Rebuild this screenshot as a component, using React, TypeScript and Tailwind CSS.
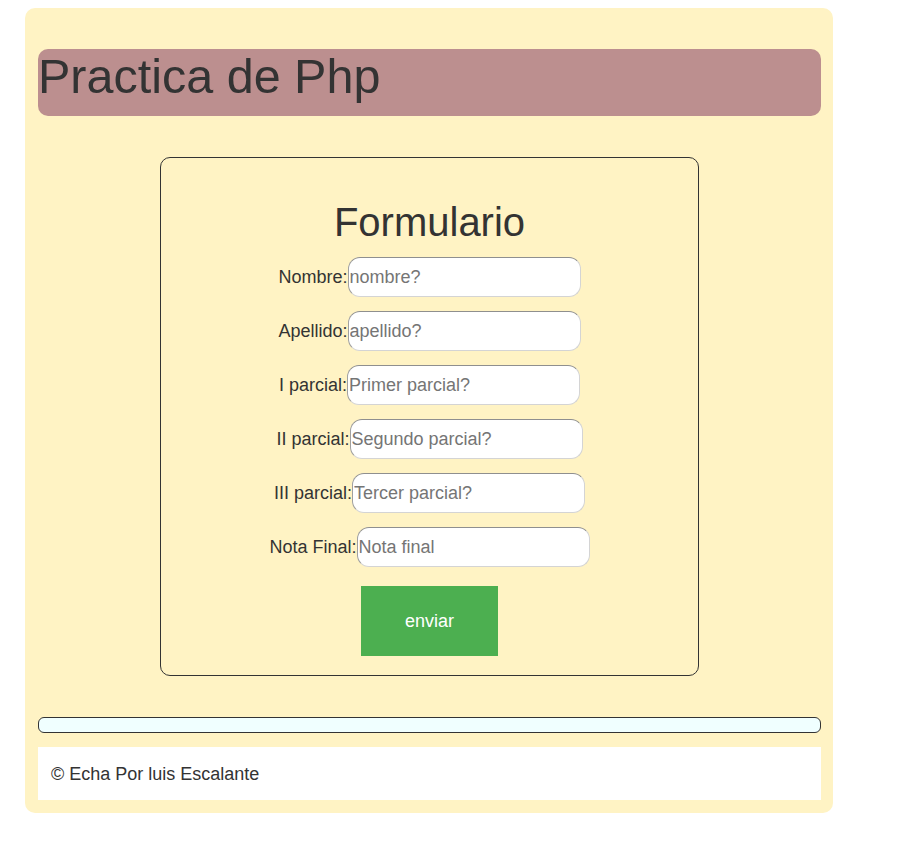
import React from "react";

const rows = [
  { label: "Nombre:", ph: "nombre?" },
  { label: "Apellido:", ph: "apellido?" },
  { label: "I parcial:", ph: "Primer parcial?" },
  { label: "II parcial:", ph: "Segundo parcial?" },
  { label: "III parcial:", ph: "Tercer parcial?" },
  { label: "Nota Final:", ph: "Nota final" },
];

export default function App() {
  return (
    <div
      className="min-h-[850px] bg-white pl-[25px] pt-[8px] text-[#333]"
      style={{ fontFamily: '"Liberation Sans", Arial, sans-serif' }}
    >
      <div className="w-[808px] rounded-[10px] bg-[#fff3c4] pt-[41px] pl-[13px] pr-[12px] pb-[13px]">
        <div className="h-[67px] rounded-[10px] bg-[#bc8f8f]">
          <h1 className="ml-0 text-[48.5px] leading-[55px] font-normal">Practica de Php</h1>
        </div>

        <form
          className="mx-auto mt-[41px] w-[539px] rounded-[10px] border border-[#333] pt-[41px] pb-[19px]"
          onSubmit={(e) => e.preventDefault()}
        >
          <h2 className="text-center text-[40px] leading-[46px] font-normal">Formulario</h2>
          <div className="mt-[12px] flex flex-col gap-[14px]">
            {rows.map((r) => (
              <div key={r.label} className="flex items-center justify-center text-[18px]">
                <label>{r.label}</label>
                <input
                  placeholder={r.ph}
                  className="h-[40px] w-[233px] rounded-[12px] border border-[#d4d4d4] border-t-[#8f8f8f] border-l-[#a0a0a0] bg-white px-[1px] text-[18px] outline-none placeholder:text-[#757575]"
                />
              </div>
            ))}
          </div>
          <button
            type="submit"
            className="mx-auto mt-[19px] block h-[70px] w-[137px] bg-[#4caf50] text-[18px] text-white"
          >
            enviar
          </button>
        </form>

        <div className="mt-[41px] h-[16px] rounded-[6px] border border-[#333] bg-[#f0ffff]" />

        <div className="mt-[14px] flex h-[53px] items-center bg-white px-[13px] pt-[1px] text-[18px]">
          © Echa Por luis Escalante
        </div>
      </div>
    </div>
  );
}
